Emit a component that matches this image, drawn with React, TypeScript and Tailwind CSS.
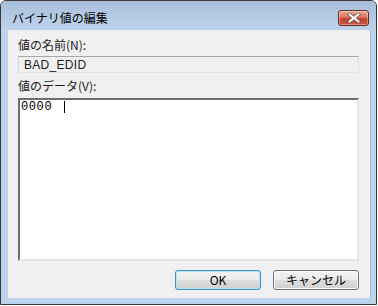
import React from "react";

const jp = "font-['Noto_Sans_CJK_JP','Noto_Sans',sans-serif]";

function CloseButton() {
    return (
        <div className="w-[31px] h-[16px] rounded-[3px] border border-[#6b2a20] bg-[linear-gradient(#e9a896,#d9755f_45%,#c0432c_55%,#c85a40)] flex items-center justify-center shadow-[inset_0_0_0_1px_rgba(255,255,255,0.35)]">
            <svg width="14" height="10" viewBox="0 0 14 10">
                <path d="M2.5 1.5 L11.5 8.5 M11.5 1.5 L2.5 8.5" stroke="#5a4a48" strokeWidth="3.4" strokeLinecap="square" />
                <path d="M2.5 1.5 L11.5 8.5 M11.5 1.5 L2.5 8.5" stroke="#ffffff" strokeWidth="2" strokeLinecap="square" />
            </svg>
        </div>
    );
}

function DlgButton(props: { label: string; focused?: boolean }) {
    return (
        <div
            className={
                "w-[86px] h-[20px] rounded-[3px] border flex items-center justify-center text-[12px] text-black bg-[linear-gradient(#f3f3f3,#ebebeb_48%,#dddddd_52%,#cfcfcf)] " +
                (props.focused ? "border-[#3d8fd0] shadow-[inset_0_0_0_1px_#b9e3f8]" : "border-[#707070] shadow-[inset_0_0_0_1px_#fbfbfb]")
            }
        >
            {props.label}
        </div>
    );
}

export default function App() {
    return (
        <div className={"w-[378px] h-[306px] bg-white " + jp}>
            <div className="w-[377px] h-[305px] border border-[#3a3a3a] rounded-t-[6px] bg-[#bcd3ec] flex flex-col overflow-hidden">
                {/* title bar */}
                <div className="h-[29px] flex items-start justify-between pl-[11px] pr-[7px] bg-[linear-gradient(#a7bdd8,#b6cce6_60%,#bcd3ec)]">
                    <div className="text-[12px] leading-[12px] mt-[11px] text-black">バイナリ値の編集</div>
                    <div className="mt-[9px]">
                        <CloseButton />
                    </div>
                </div>
                {/* client */}
                <div className="flex-1 flex ml-[7px] mr-[5px] mb-[6px]">
                    <div className="flex-1 bg-[#f0f0f0] flex flex-col px-[10px] pr-[11px] border-r border-[#9fbde3]">
                        <div className="text-[12px] leading-[12px] mt-[9px] text-[#1a1a1a]">値の名前(N):</div>
                        <div className="mt-[5px] h-[17px] border border-[#e3e3e3] border-t-[#a8a8a8] border-l-[#dadada] bg-[#f0f0f0] flex items-center pl-[5px] text-[12px] tracking-[0.3px] text-[#222] font-['Liberation_Sans',sans-serif]">
                            BAD_EDID
                        </div>
                        <div className="text-[12px] leading-[12px] mt-[7px] text-[#1a1a1a]">値のデータ(V):</div>
                        <div className="mt-[6px] h-[163px] border-2 border-t-[#6d6d6d] border-l-[#6d6d6d] border-r-[#e6e6e6] border-b-[#e6e6e6] bg-white pl-[1px] pt-[1px]">
                            <div className="flex items-center text-[12px] leading-[12px] tracking-[0.6px] font-['Liberation_Mono',monospace] text-black">
                                <span>0000</span>
                                <span className="ml-[12px] w-px h-[12px] bg-black" />
                            </div>
                        </div>
                        <div className="mt-[9px] flex justify-end gap-[12px]">
                            <DlgButton label="OK" focused />
                            <DlgButton label="キャンセル" />
                        </div>
                    </div>
                </div>
            </div>
        </div>
    );
}
